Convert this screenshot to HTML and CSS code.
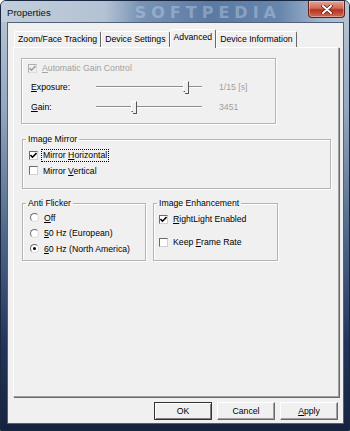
FILE: index.html
```html
<!DOCTYPE html>
<html lang="en">
<head>
  <meta charset="UTF-8" />
  <meta name="viewport" content="width=device-width, initial-scale=1.0" />
  <title>Properties</title>
  <link rel="stylesheet" href="styles.css">
</head>
<body>
  <div class="window">
    <div class="titlebar">
      <span class="title">Properties</span>
      <span class="watermark">SOFTPEDIA</span>
      <button class="close" aria-label="Close">
        <svg width="12" height="9" viewBox="0 0 12 9">
          <path d="M2 1 L10 8 M10 1 L2 8" stroke="#4a1a14" stroke-width="3.4" stroke-linecap="round"/>
          <path d="M2 1 L10 8 M10 1 L2 8" stroke="#fff" stroke-width="2" stroke-linecap="round"/>
        </svg>
      </button>
    </div>

    <div class="client">
      <div class="tabs">
        <div class="tab">Zoom/Face Tracking</div>
        <div class="tab">Device Settings</div>
        <div class="tab selected">Advanced</div>
        <div class="tab">Device Information</div>
      </div>

      <div class="panel">
        <div class="group gain">
          <div class="row first">
            <span class="check disabled">
              <svg width="7" height="7" viewBox="0 0 7 7"><polyline points="0.5,3 2.5,5.2 6.5,1" fill="none" stroke="#a0a0a0" stroke-width="1.6"/></svg>
            </span>
            <span class="muted"><u>A</u>utomatic Gain Control</span>
          </div>
          <div class="row">
            <span class="label"><u>E</u>xposure:</span>
            <div class="slider">
              <div class="track"></div>
              <span class="thumb" style="left: 85%"></span>
            </div>
            <span class="value">1/15 [s]</span>
          </div>
          <div class="row">
            <span class="label"><u>G</u>ain:</span>
            <div class="slider">
              <div class="track"></div>
              <span class="thumb" style="left: 36%"></span>
            </div>
            <span class="value">3451</span>
          </div>
        </div>

        <fieldset class="group mirror">
          <legend>Image Mirror</legend>
          <div class="rows">
            <div class="row">
              <span class="check">
                <svg width="7" height="7" viewBox="0 0 7 7"><polyline points="0.5,3 2.5,5.2 6.5,1" fill="none" stroke="#000" stroke-width="1.6"/></svg>
              </span>
              <span class="focus">Mirror <u>H</u>orizontal</span>
            </div>
            <div class="row">
              <span class="check"></span>
              <span>Mirror <u>V</u>ertical</span>
            </div>
          </div>
        </fieldset>

        <div class="pair">
          <fieldset class="group flicker">
            <legend>Anti Flicker</legend>
            <div class="rows">
              <div class="row"><span class="radio"></span><span><u>O</u>ff</span></div>
              <div class="row"><span class="radio"></span><span><u>5</u>0 Hz (European)</span></div>
              <div class="row"><span class="radio on"></span><span><u>6</u>0 Hz (North America)</span></div>
            </div>
          </fieldset>

          <fieldset class="group enhance">
            <legend>Image Enhancement</legend>
            <div class="rows">
              <div class="row">
                <span class="check">
                  <svg width="7" height="7" viewBox="0 0 7 7"><polyline points="0.5,3 2.5,5.2 6.5,1" fill="none" stroke="#000" stroke-width="1.6"/></svg>
                </span>
                <span><u>R</u>ightLight Enabled</span>
              </div>
              <div class="row">
                <span class="check"></span>
                <span>Keep <u>F</u>rame Rate</span>
              </div>
            </div>
          </fieldset>
        </div>
      </div>

      <div class="buttons">
        <button class="btn default">OK</button>
        <button class="btn">Cancel</button>
        <button class="btn"><u>A</u>pply</button>
      </div>
    </div>
  </div>
</body>
</html>
```

FILE: styles.css
```css
body {
  margin: 0;
  font-family: "Liberation Sans", Arial, sans-serif;
  font-size: 8.7px;
  color: #000;
  background: #fff;
  overflow: hidden;
}
u {
  text-decoration: underline;
  text-underline-offset: 1px;
}

/* window frame */
.window {
  width: 350px;
  height: 431px;
  box-sizing: border-box;
  padding: 0 6px 7px 7px;
  border: 1px solid #1a2740;
  border-radius: 6px 6px 0 0;
  background: linear-gradient(180deg, #bcc8d7 0%, #94a7be 25%, #4f6689 55%, #22345a 80%, #16233f 100%);
  display: flex;
  flex-direction: column;
}
.titlebar {
  height: 21px;
  margin: 0 -6px 0 -7px;
  padding-left: 6px;
  display: flex;
  align-items: flex-start;
  border-radius: 5px 5px 0 0;
  background: linear-gradient(90deg, #c2cedb 0%, #b3c2d3 30%, #7893b5 40%, #5b7aa3 60%, #6686ad 80%, #a3b6cc 92%, #b4c3d4 100%);
}
.title {
  line-height: 23px;
  font-size: 9.6px;
  color: #111;
}
.watermark {
  margin-left: 84px;
  margin-top: 2px;
  font-family: "DejaVu Sans", sans-serif;
  font-weight: bold;
  font-size: 16px;
  line-height: 19px;
  letter-spacing: 5px;
  color: rgba(205, 220, 240, 0.4);
}
.close {
  margin-left: auto;
  margin-right: 4px;
  width: 37px;
  height: 17px;
  padding: 0;
  border: 1px solid #5e2219;
  border-top: none;
  border-radius: 0 0 4px 4px;
  background: linear-gradient(180deg, #e3a597 0%, #d06a55 45%, #b8321d 55%, #cf6b55 100%);
  box-shadow: inset 0 0 0 1px rgba(255, 255, 255, 0.35);
  display: flex;
  align-items: center;
  justify-content: center;
}

.client {
  flex: 1;
  margin-top: 1px;
  padding: 6px 4px 0 5px;
  background: #f0f0f0;
  box-shadow: 0 0 0 1px #52617a;
}

/* tabs */
.tabs {
  height: 18px;
  padding-left: 1px;
  display: flex;
  align-items: flex-end;
}
.tab {
  height: 16px;
  box-sizing: border-box;
  padding: 0 3px;
  line-height: 15px;
  border: 1px solid;
  border-color: #fff #696969 transparent #fff;
  border-bottom: none;
  border-radius: 2px 2px 0 0;
  white-space: nowrap;
}
.tab.selected {
  height: 19px;
  margin-bottom: -1px;
  line-height: 14px;
  position: relative;
  z-index: 1;
  background: #f0f0f0;
}

.panel {
  height: 350px;
  box-sizing: border-box;
  padding: 10px 0 0 7px;
  border: 1px solid;
  border-color: #fff #a0a0a0 #a0a0a0 #fff;
  box-shadow: 1px 1px 0 #696969;
}

/* group boxes */
.group {
  box-sizing: border-box;
  border: 1px solid #b4b4b4;
  box-shadow: inset 1px 1px 0 #fff, 1px 1px 0 #fff;
}
fieldset.group {
  margin: 9px 0 0 1px;
  padding: 0;
  min-width: 0;
}
legend {
  margin-left: 3px;
  padding: 0 2px;
  line-height: 12px;
}
.row {
  display: flex;
  align-items: center;
  white-space: nowrap;
}

.gain {
  width: 255px;
  height: 66px;
}
.gain .row {
  height: 20px;
  padding-left: 9px;
}
.gain .row.first {
  height: 18px;
  padding-left: 6px;
}
.label {
  width: 65px;
}
.muted,
.value {
  color: #a0a0a0;
}
.value {
  margin-left: 17px;
}
.slider {
  width: 106px;
  height: 12px;
  position: relative;
}
.track {
  margin-top: 5px;
  height: 0;
  border-top: 1px solid #8e8e8e;
  border-bottom: 1px solid #fff;
}
.thumb {
  position: absolute;
  top: 0;
  width: 4px;
  height: 9px;
  margin-left: -3px;
  border: 1px solid;
  border-color: #fff #555 #555 #fff;
  background: #f0f0f0;
}
.thumb::after {
  content: "";
  position: absolute;
  left: 1px;
  bottom: -3px;
  width: 3px;
  height: 2px;
  border-right: 1px solid #555;
  border-bottom: 1px solid #555;
  background: #f0f0f0;
}

.mirror {
  width: 309px;
}
.mirror .rows {
  padding: 3px 0 10px 6px;
}
.mirror .row {
  height: 15px;
}
.focus {
  margin-left: -1px;
  padding: 0 1px;
  line-height: 11px;
  outline: 1px dotted #000;
}

.pair {
  display: flex;
  align-items: stretch;
}
.pair fieldset.group {
  margin-top: 8px;
}
.flicker {
  width: 124px;
}
.flicker .rows {
  padding: 1px 0 3px 7px;
}
.flicker .row {
  height: 15.5px;
}
.enhance {
  width: 125px;
  margin-left: 7px !important;
}
.enhance .rows {
  padding: 2px 0 8px 5px;
  display: flex;
  flex-direction: column;
  gap: 7px;
}
.enhance .row {
  height: 16px;
}

/* checkbox and radio */
.check {
  width: 9px;
  height: 9px;
  box-sizing: border-box;
  margin-right: 5px;
  border: 1px solid;
  border-color: #6b6b6b #d0d0d0 #d0d0d0 #6b6b6b;
  background: #fff;
  display: inline-flex;
  align-items: center;
  justify-content: center;
  flex-shrink: 0;
}
.check.disabled {
  border-color: #b0b0b0 #dcdcdc #dcdcdc #b0b0b0;
  background: #f0f0f0;
}
.radio {
  width: 9px;
  height: 9px;
  box-sizing: border-box;
  margin-right: 5px;
  border-radius: 50%;
  border: 1px solid;
  border-color: #6b6b6b #dcdcdc #dcdcdc #6b6b6b;
  background: #fff;
  display: inline-flex;
  align-items: center;
  justify-content: center;
  flex-shrink: 0;
}
.radio.on::after {
  content: "";
  width: 3px;
  height: 3px;
  border-radius: 50%;
  background: #000;
}

/* dialog buttons */
.buttons {
  margin-top: 5px;
  padding-right: 1px;
  display: flex;
  justify-content: flex-end;
  gap: 5px;
}
.btn {
  width: 58px;
  height: 18px;
  padding: 0;
  font: inherit;
  color: #000;
  background: #f0f0f0;
  border: 1px solid;
  border-color: #fff #696969 #696969 #fff;
  box-shadow: inset -1px -1px 0 #a0a0a0;
}
.btn.default {
  border-color: #333;
  box-shadow: inset 1px 1px 0 #fff, inset -1px -1px 0 #808080;
}
```
